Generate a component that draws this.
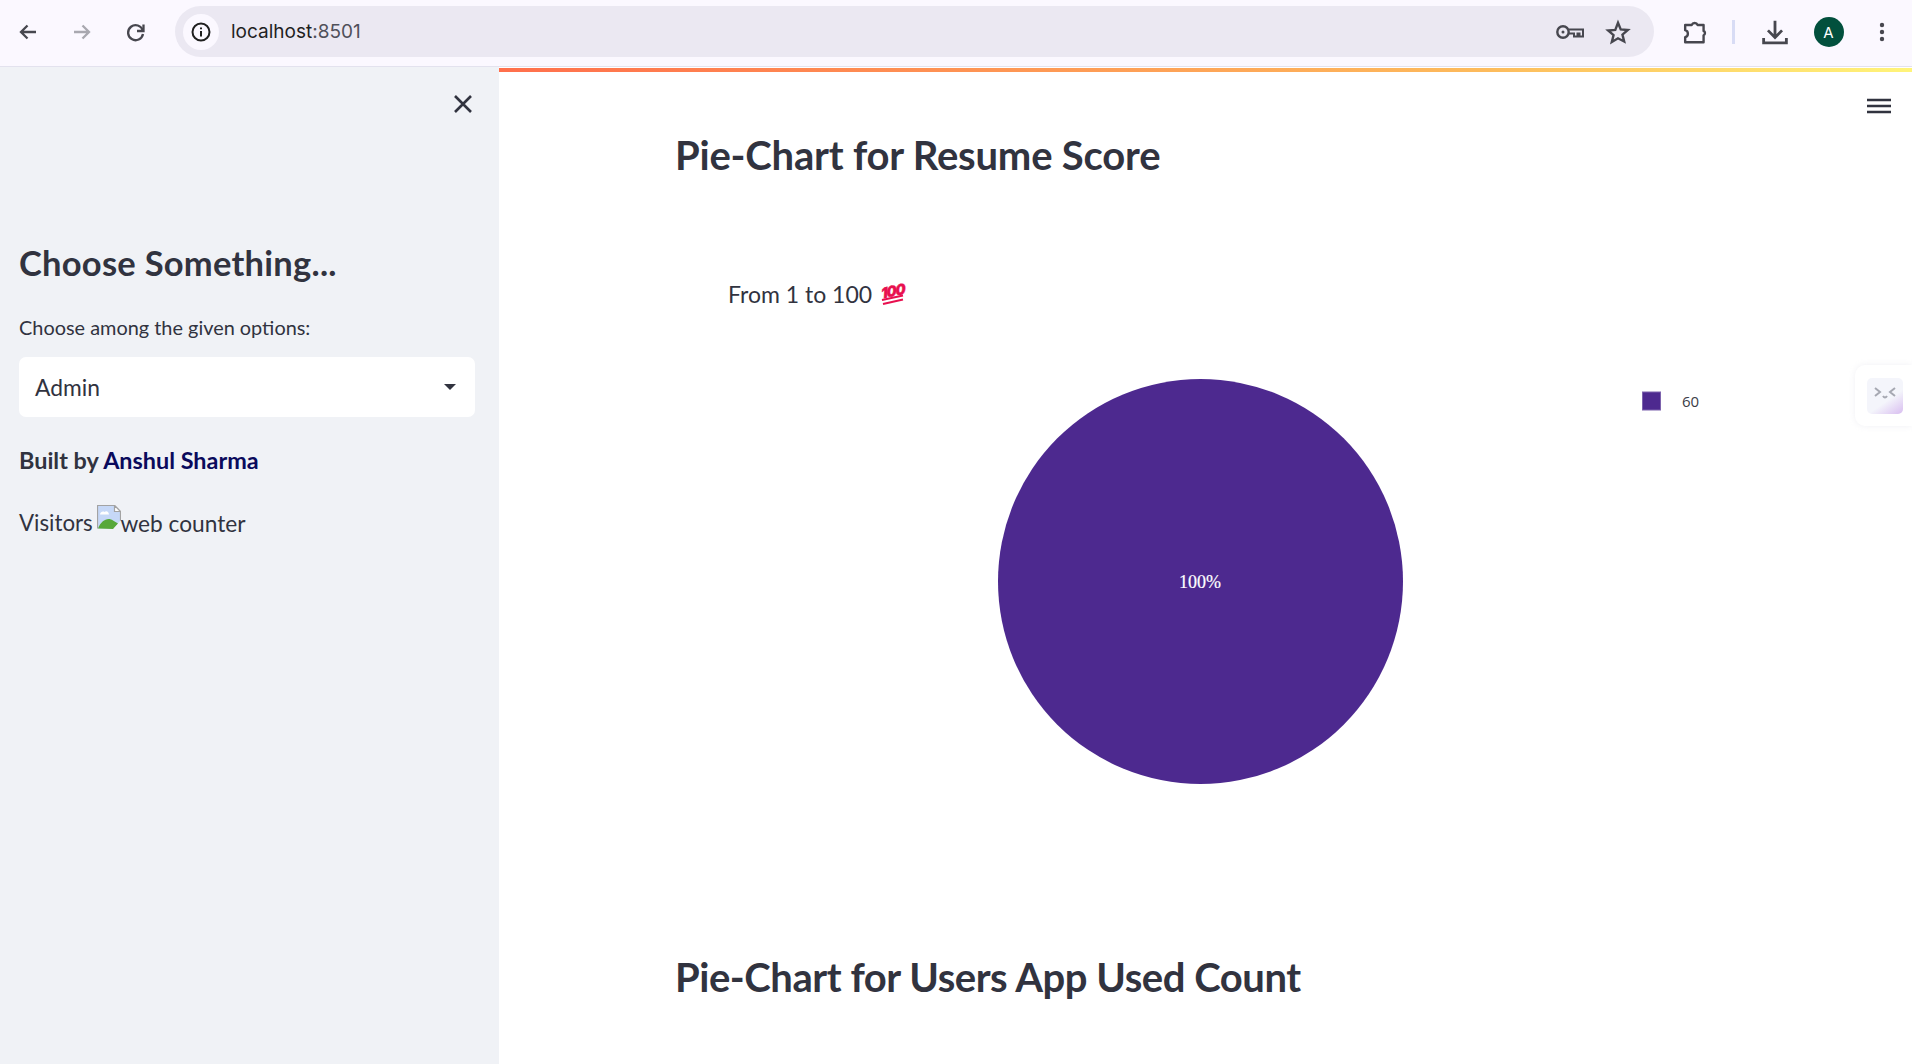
<div class="window">
  <header class="toolbar">
    <div class="nav">
      <svg class="ic" viewBox="0 0 24 24"><path d="M20 12H5M11.5 5.500 5 12l6.500 6.500" class="st"/></svg>
      <svg class="ic dim" viewBox="0 0 24 24"><path d="M4 12h15M12.500 5.500 19 12l-6.500 6.500" class="st"/></svg>
      <svg class="ic" viewBox="0 0 24 24"><path d="M18.800 10.500A7.500 7.500 0 1 0 19 14" class="st"/><path d="M19.500 4.500v6.500h-6.500" class="st"/></svg>
    </div>
    <div class="omnibox">
      <span class="info"><svg viewBox="0 0 24 24" width="24" height="24"><circle cx="12" cy="12" r="8.500" fill="none" stroke="#1f1f1f" stroke-width="2"/><path d="M12 11v5.500M12 7.500v1.800" stroke="#1f1f1f" stroke-width="2" fill="none"/></svg></span>
      <span class="url">localhost<span class="port">:8501</span></span>
      <span class="spacer"></span>
      <svg class="key" viewBox="0 0 28 16"><circle cx="7" cy="8" r="5.700" fill="none" stroke="#47474f" stroke-width="2.400"/><circle cx="7" cy="8" r="1.500" fill="#47474f"/><path d="M13 5.500h14v7h-3.500V9.500h-2v3h-3.500v-3H13" fill="none" stroke="#47474f" stroke-width="2"/></svg>
      <svg class="star" viewBox="0 0 24 24"><path d="M12 3.500l2.500 6.100 6.600.5-5 4.300 1.600 6.400L12 17.800l-5.700 3.500 1.600-6.400-5-4.300 6.600-.5z" fill="none" stroke="#47474f" stroke-width="2.200"/></svg>
    </div>
    <div class="actions">
      <svg class="ext" viewBox="0 0 24 24"><path d="M2 5.500h6a3 3 0 0 1 5.500 0H19v5.500a2.200 2.200 0 0 1 0 4v6.500H2v-4.800a3.300 3.300 0 0 0 0-6.400z" fill="none" stroke="#47474f" stroke-width="2.200" stroke-linejoin="round"/></svg>
      <span class="sep"></span>
      <svg class="dl" viewBox="0 0 24 24"><path d="M12 1.500v15M5.500 10.500l6.500 6.500 6.500-6.500M1.500 17.500v4.500h21v-4.500" fill="none" stroke="#47474f" stroke-width="2.600"/></svg>
      <span class="avatar">A</span>
      <svg class="more" viewBox="0 0 6 24"><circle cx="3" cy="5" r="2.200"/><circle cx="3" cy="12" r="2.200"/><circle cx="3" cy="19" r="2.200"/></svg>
    </div>
  </header>

  <div class="page">
    <aside class="sidebar">
      <div class="close-row">
        <svg viewBox="0 0 24 24" width="24" height="24"><path d="M4 4l16 16M20 4L4 20" stroke="#31333f" stroke-width="2.600" fill="none"/></svg>
      </div>
      <h2>Choose Something...</h2>
      <label for="sel">Choose among the given options:</label>
      <div class="select" id="sel">
        <span>Admin</span>
        <svg viewBox="0 0 12 6" width="12" height="6"><path d="M0 0h12L6 6z" fill="#31333f"/></svg>
      </div>
      <p class="built">Built by <a href="#top">Anshul Sharma</a></p>
      <p class="visitors">Visitors <span class="broken"><svg class="bimg" viewBox="0 0 24 24" width="24" height="24"><path d="M.5.500h17l6 6v9l-7.500 8H.5z" fill="#c6d8f7"/><path d="M.5 23.500V.5h17l6 6v9" fill="none" stroke="#a3a3a3" stroke-width="1.200"/><path d="M17.500.5v6h6z" fill="#fff" stroke="#a3a3a3" stroke-width="1.200"/><path d="M3 9.500c.5-3 3-3.500 4.500-2.500 1.500-1.500 4-1 4.500 2.500z" fill="#fff"/><path d="M1 23.500c3-8 10-12 15-8l5 3-5 5.500z" fill="#57a83a"/><path d="M23.500 16.500v7H17z" fill="#f0f2f6"/></svg><span class="alt">web counter</span></span></p>
    </aside>

    <main class="main">
      <div class="stripe"></div>
      <button class="menu" aria-label="Menu"><svg viewBox="0 0 24 18" width="24" height="18"><path d="M0 3h24M0 9h24M0 15h24" stroke="#31333f" stroke-width="2.400"/></svg></button>
      <div class="content">
        <h1>Pie-Chart for Resume Score</h1>
        <p class="sub">From 1 to 100 <svg class="emoji" viewBox="0 0 24 22" width="24" height="22"><text x="2.500" y="13.500" transform="rotate(-12 12 11) skewX(-6)" class="hundred">100</text><path d="M2 17l21-4.500M3 21l20-4.500" stroke="#e8104f" stroke-width="2.200"/></svg></p>
        <svg class="plot" viewBox="0 0 1237 500" width="1237" height="500">
          <circle cx="525.500" cy="270.500" r="202.500" fill="#4d298f"/>
          <text x="525" y="277" class="pct">100%</text>
          <rect x="967.500" y="81" width="18" height="18" fill="#4d298f" stroke="#7d63ad"/>
          <text x="1007" y="96" class="lg">60</text>
        </svg>
        <h1 class="second">Pie-Chart for Users App Used Count</h1>
      </div>
      <div class="fab"><div class="fab-in"><svg viewBox="0 0 36 36" width="36" height="36"><path d="M8 10l5 4-5 4M28 10l-5 4 5 4" fill="none" stroke="#a6a8b2" stroke-width="2"/><path d="M16 18q2 3 4 0" fill="none" stroke="#a6a8b2" stroke-width="2"/></svg></div></div>
    </main>
  </div>
</div>

<style>
  :global(body) { margin: 0; background: #fff; overflow: hidden; }
  .window { width: 1912px; height: 1064px; display: flex; flex-direction: column; overflow: hidden; font-family: Lato, sans-serif; color: #31333f; }
  .toolbar { height: 67px; box-sizing: border-box; border-bottom: 1px solid #e3e2ee; background: #fbf8ff; display: flex; align-items: center; flex: none; }
  .nav { display: flex; align-items: center; gap: 30px; padding-left: 16px; width: 175px; box-sizing: border-box; flex: none; margin-top: -2px; }
  .ic { width: 24px; height: 24px; flex: none; }
  .st { fill: none; stroke: #47474f; stroke-width: 2.300; }
  .dim .st { stroke: #a9a8b0; }
  .omnibox { width: 1479px; height: 51px; margin-top: -3px; border-radius: 26px; background: #ebe8f2; display: flex; align-items: center; box-sizing: border-box; padding-left: 8px; flex: none; }
  .info { width: 36px; height: 36px; border-radius: 50%; background: #fbf8ff; display: flex; align-items: center; justify-content: center; flex: none; }
  .url { font-family: Inter, sans-serif; font-size: 19px; margin-left: 12px; color: #1f1f1f; letter-spacing: 0; }
  .port { color: #50505a; }
  .spacer { flex: 1; }
  .key { width: 28px; height: 16px; margin-right: 21px; }
  .star { width: 26px; height: 26px; margin-right: 23px; }
  .actions { display: flex; align-items: center; flex: 1; margin-top: -2px; }
  .ext { width: 26px; height: 26px; margin-left: 29px; }
  .sep { width: 2.500px; height: 24px; background: #d8dcf5; margin-left: 23px; }
  .dl { width: 26px; height: 26px; margin-left: 27px; }
  .avatar { width: 30px; height: 30px; border-radius: 50%; background: #02503d; color: #fff; font-family: Inter, sans-serif; font-size: 15px; display: flex; align-items: center; justify-content: center; margin-left: 26px; }
  .more { width: 6px; height: 24px; margin-left: 35px; fill: #47474f; }

  .page { flex: 1; display: flex; min-height: 0; }
  .sidebar { width: 499px; flex: none; background: #f0f2f6; padding: 0 24px 0 19px; box-sizing: border-box; }
  .close-row { display: flex; justify-content: flex-end; height: 24px; padding: 25px 0 0; }
  h2 { margin: 0; font-size: 34.500px; font-weight: 700; line-height: 44px; margin-top: 125px; letter-spacing: 0.25px; }
  label { display: block; font-size: 19.900px; line-height: 26px; margin-top: 29px; }
  .select { height: 60px; margin-top: 17px; background: #fff; border-radius: 7px; display: flex; align-items: center; justify-content: space-between; padding: 0 19px 0 16px; font-size: 22.800px; }
  .built { margin: 28px 0 0; font-size: 23.400px; font-weight: 700; line-height: 30px; }
  .built a { color: #0a0a5c; text-decoration: none; }
  .visitors { margin: 24px 0 0; font-size: 22.300px; line-height: 32px; }
  .broken { display: inline-flex; align-items: flex-end; margin-left: -1px; }
  .bimg { flex: none; position: relative; top: -2px; }
  .alt { position: relative; top: 9px; font-size: 22.700px; margin-left: -1px; }

  .main { flex: 1; position: relative; min-width: 0; }
  .stripe { height: 4px; margin-top: 1px; background: linear-gradient(90deg, #ff6f4c, #fdbb5c 70%, #fff47a); }
  .menu { position: absolute; top: 30px; right: 21px; padding: 0; border: 0; background: none; display: flex; }
  .content { padding: 0 0 0 176px; display: flow-root; }
  h1 { margin: 55px 0 0; font-size: 40px; font-weight: 700; line-height: 56px; letter-spacing: -0.2px; }
  .sub { margin: 94px 0 0 53px; font-size: 23px; line-height: 34px; display: flex; align-items: center; gap: 8px; }
  .emoji { flex: none; overflow: visible; }
  .hundred { font: italic 900 14.500px Inter, sans-serif; fill: #e8104f; stroke: #e8104f; stroke-width: 0.4px; letter-spacing: -1.2px; }
  .plot { display: block; }
  .pct { font: 400 18px "Liberation Serif", serif; fill: #fff; stroke: #fff; stroke-width: 0.2px; text-anchor: middle; }
  .lg { font: 15px "Open Sans", sans-serif; fill: #3c3c46; }
  .second { margin-top: 138px; letter-spacing: -0.45px; }
  .fab { position: absolute; right: 0; top: 298px; width: 57px; height: 61px; background: #fff; border-radius: 10px 0 0 10px; box-shadow: 0 0 6px rgba(180,180,200,.2); display: flex; align-items: center; padding-left: 12px; box-sizing: border-box; }
  .fab-in { width: 36px; height: 36px; border-radius: 5px; background: linear-gradient(145deg, #f4f5fb 60%, #d8bdf0); }
</style>
